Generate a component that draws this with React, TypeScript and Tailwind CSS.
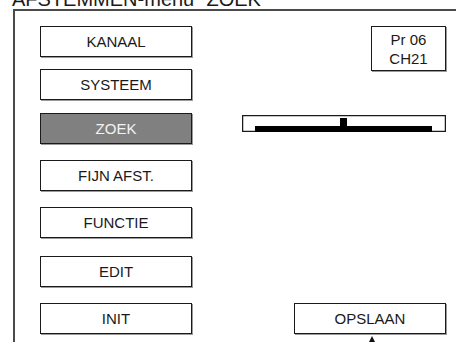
import React from "react";

const Btn = ({ label, active, className = "" }: { label: string; active?: boolean; className?: string }) => (
  <div
    className={`flex h-[31px] w-[152px] items-center justify-center border border-[#1a1a1a] shadow-[1px_1px_0_#9a9a9a] text-[15px] leading-none ${
      active ? "bg-[#808080] text-[#f2f2f2]" : "bg-white text-[#1a1a1a]"
    } ${className}`}
  >
    {label}
  </div>
);

export default function App() {
  return (
    <div
      className="relative h-[342px] w-[456px] overflow-hidden bg-white text-[#1a1a1a]"
      style={{ fontFamily: '"Liberation Sans", Arial, sans-serif' }}
    >
      <div className="-mt-[11px] h-[20px] whitespace-nowrap pl-[12px] text-[20px] leading-[20px]">
        AFSTEMMEN-menu “ZOEK”
      </div>
      <div className="ml-[13px] flex h-[340px] w-[460px] border-l-2 border-t-2 border-[#4a4a4a]">
        <div className="flex flex-col pl-[25px] pt-[15px]">
          <Btn label="KANAAL" />
          <Btn label="SYSTEEM" className="mt-[12px]" />
          <Btn label="ZOEK" active className="mt-[13px]" />
          <Btn label="FIJN AFST." className="mt-[16px]" />
          <Btn label="FUNCTIE" className="mt-[16px]" />
          <Btn label="EDIT" className="mt-[18px]" />
          <Btn label="INIT" className="mt-[16px]" />
        </div>
        <div className="flex w-[254px] flex-col items-end pt-[15px]">
          <div className="flex h-[45px] w-[75px] flex-col items-center justify-center border border-[#1a1a1a] shadow-[1px_1px_0_#9a9a9a] text-[15px] leading-[19px]">
            <span>Pr 06</span>
            <span>CH21</span>
          </div>
          <div className="mt-[44px] h-[17px] w-[204px]">
            <svg width="204" height="17" viewBox="0 0 204 17">
              <rect x="0.5" y="0.5" width="203" height="16" fill="white" stroke="#1a1a1a" strokeWidth="1.5" />
              <rect x="13" y="11" width="177" height="6" fill="#000" />
              <rect x="98" y="3" width="7" height="9" fill="#000" />
            </svg>
          </div>
          <Btn label="OPSLAAN" className="mt-[171px]" />
        </div>
      </div>
      <svg className="absolute left-[368px] top-[336px]" width="8" height="6" viewBox="0 0 8 6">
        <polygon points="4,0 7,6 1,6" fill="#111" />
      </svg>
    </div>
  );
}
